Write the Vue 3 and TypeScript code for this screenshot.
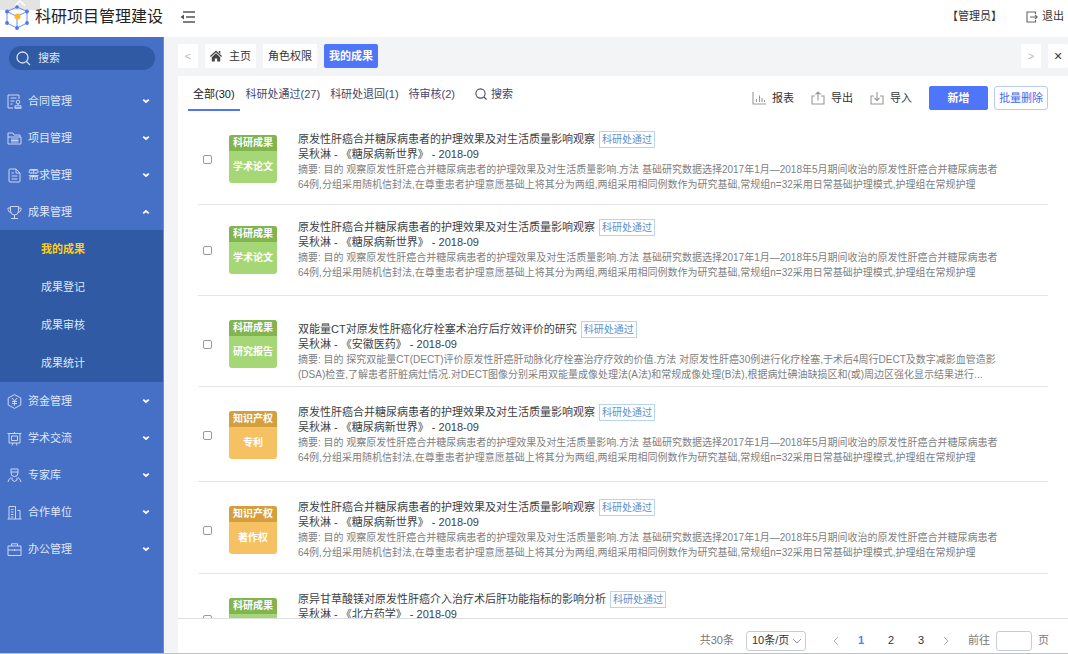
<script setup lang="ts">
import { ref } from 'vue'

interface MenuItem {
  label: string
  icon: string
  open?: boolean
  children?: string[]
}

interface AchievementRecord {
  kind: string
  type: string
  tone: 'green' | 'orange'
  title: string
  author: string
  summary: string[]
  layout: string
}

const menu: MenuItem[] = [
  { label: '合同管理', icon: 'contract' },
  { label: '项目管理', icon: 'folder' },
  { label: '需求管理', icon: 'doc' },
  { label: '成果管理', icon: 'trophy', open: true, children: ['我的成果', '成果登记', '成果审核', '成果统计'] },
  { label: '资金管理', icon: 'fund' },
  { label: '学术交流', icon: 'board' },
  { label: '专家库', icon: 'expert' },
  { label: '合作单位', icon: 'building' },
  { label: '办公管理', icon: 'case' },
]

const filters = ['全部(30)', '科研处通过(27)', '科研处退回(1)', '待审核(2)']
const activeFilter = ref(0)
const activeChild = ref('我的成果')
const page = ref(1)
const keyword = ref('')
const jump = ref('')
const pageSize = ref('10')

const nursing = {
  title: '原发性肝癌合并糖尿病患者的护理效果及对生活质量影响观察',
  author: '吴秋淋 - 《糖尿病新世界》 - 2018-09',
  summary: [
    '摘要: 目的 观察原发性肝癌合并糖尿病患者的护理效果及对生活质量影响.方法 基础研究数据选择2017年1月—2018年5月期间收治的原发性肝癌合并糖尿病患者',
    '64例,分组采用随机信封法,在尊重患者护理意愿基础上将其分为两组,两组采用相同例数作为研究基础,常规组n=32采用日常基础护理模式,护理组在常规护理',
  ],
}

const records: AchievementRecord[] = [
  { kind: '科研成果', type: '学术论文', tone: 'green', layout: 'first', ...nursing },
  { kind: '科研成果', type: '学术论文', tone: 'green', layout: 'raised', ...nursing },
  {
    kind: '科研成果',
    type: '研究报告',
    tone: 'green',
    layout: 'lowered',
    title: '双能量CT对原发性肝癌化疗栓塞术治疗后疗效评价的研究',
    author: '吴秋淋 - 《安徽医药》 - 2018-09',
    summary: [
      '摘要: 目的 探究双能量CT(DECT)评价原发性肝癌肝动脉化疗栓塞治疗疗效的价值.方法 对原发性肝癌30例进行化疗栓塞,于术后4周行DECT及数字减影血管造影',
      '(DSA)检查,了解患者肝脏病灶情况.对DECT图像分别采用双能量成像处理法(A法)和常规成像处理(B法),根据病灶碘油缺损区和(或)周边区强化显示结果进行...',
    ],
  },
  { kind: '知识产权', type: '专利', tone: 'orange', layout: 'tall', ...nursing },
  { kind: '知识产权', type: '著作权', tone: 'orange', layout: 'normal', ...nursing },
  {
    kind: '科研成果',
    type: '',
    tone: 'green',
    layout: 'last',
    title: '原异甘草酸镁对原发性肝癌介入治疗术后肝功能指标的影响分析',
    author: '吴秋淋 - 《北方药学》 - 2018-09',
    summary: [],
  },
]
</script>

<template>
  <div class="app">
    <header class="header">
      <div class="corner" aria-hidden="true">
        <svg width="12" height="6" viewBox="0 0 12 6"><path d="M1 5.500L6 1l5 4.500" /></svg>
      </div>
      <svg class="logo" width="24" height="26" viewBox="0 0 24 26" aria-hidden="true">
        <g fill="none" stroke="#6f8cf0" stroke-width="1">
          <path d="M12 3L22 7.500V19L12 24L2 19V7.500z" />
          <path d="M2 7.500L12 12.500L22 7.500M12 12.500V24" />
        </g>
        <g fill="#4d76f5">
          <circle cx="12" cy="3" r="1.800" /><circle cx="22" cy="7.500" r="1.900" /><circle cx="22" cy="19" r="1.900" />
          <circle cx="12" cy="24" r="1.900" /><circle cx="2" cy="19" r="1.900" /><circle cx="2" cy="7.500" r="1.900" />
        </g>
        <circle cx="12.500" cy="12.500" r="3" fill="#fbb62c" />
      </svg>
      <h1 class="brand">科研项目管理建设</h1>
      <button class="plain fold" type="button" aria-label="收起菜单">
        <svg width="16" height="12" viewBox="0 0 16 12" fill="none" stroke="#555" stroke-width="1.300">
          <path d="M3 1h12M6 6h9M3 11h12" /><path d="M4 3.500L0.500 6L4 8.500z" fill="#555" stroke="none" />
        </svg>
      </button>
      <span class="user">【管理员】</span>
      <button class="plain logout" type="button">
        <svg width="12" height="12" viewBox="0 0 12 12" fill="none" stroke="#666" stroke-width="1.100">
          <path d="M9.500 3V1H1v10h8.500V9M4 6h7M9 3.800L11.200 6L9 8.200" />
        </svg>
        退出
      </button>
    </header>

    <div class="body">
      <aside class="sidebar">
        <label class="search">
          <svg width="15" height="15" viewBox="0 0 15 15" fill="none" stroke="#d3def5" stroke-width="1.300">
            <circle cx="6.500" cy="6.500" r="5.500" /><path d="M10.500 10.500L14 14" />
          </svg>
          <input v-model="keyword" type="text" placeholder="搜索" aria-label="搜索" />
        </label>
        <nav>
          <template v-for="item in menu" :key="item.label">
            <button class="plain menu-item" type="button" :aria-expanded="!!item.open">
              <svg class="menu-icon" width="15" height="15" viewBox="0 0 15 15" aria-hidden="true">
                <template v-if="item.icon === 'contract'">
                  <path d="M6 14H1V1h11v4M3.500 4h6M3.500 7h4M3.500 10h2" />
                  <circle cx="11" cy="8" r="1.800" /><path d="M11 10v1.500M8 14v-2.200h6V14zM7.500 14h7" />
                </template>
                <template v-else-if="item.icon === 'folder'">
                  <path d="M1 13V2h5l1 2h6v2M1 13h13V6H1" /><path d="M4 8h7.500M4 9.500h7.500M4 11h7.500" />
                </template>
                <template v-else-if="item.icon === 'doc'">
                  <path d="M9 1H3Q2 1 2 2v11q0 1 1 1h9q1 0 1-1V5zM9 1v4h4M4.500 5H7M4.500 8h6M4.500 11h6" />
                </template>
                <template v-else-if="item.icon === 'trophy'">
                  <path d="M3.500 1.500h8V6q0 4-4 4t-4-4zM3.500 3H1v1.500Q1 7 4 7.500M11.500 3H14v1.500Q14 7 11 7.500M7.500 10v3.500M4 13.500h7" />
                </template>
                <template v-else-if="item.icon === 'fund'">
                  <path d="M7.500 0.600L13.800 4v7L7.500 14.400L1.200 11V4zM5 4l2.500 3L10 4M5 7.500h5M5 9.500h5M7.500 7v4.500" />
                </template>
                <template v-else-if="item.icon === 'board'">
                  <path d="M0.500 2.500h14M2 2.500v9.500h11V2.500M4.500 5h6v4.500h-6zM7.500 1v1.500M6 12l-1 2.500M9 12l1 2.500" />
                </template>
                <template v-else-if="item.icon === 'expert'">
                  <path d="M4 1h7v4q0 3.500-3.500 3.500T4 5zM4 4h7M4 9.500Q1.500 11 1 14M11 9.500q2.500 1.500 3 4.500M5 9.500V12l2.500 1.500L10 12V9.500" />
                </template>
                <template v-else-if="item.icon === 'building'">
                  <path d="M2 14V1.500h6.500V14M10.500 5.500H13V14M0.500 14h14M4 4.500h2.500M4 7h2.500M4 9.500h2.500M4 12h2.500" />
                </template>
                <template v-else>
                  <path d="M1 4h13v9.500H1zM4.500 4V1.800h6V4M1 8h13M7.500 7v2" />
                </template>
              </svg>
              <span>{{ item.label }}</span>
              <svg class="chevron" width="8" height="6" viewBox="0 0 8 6" aria-hidden="true">
                <path :d="item.open ? 'M1.200 4.400L4 2l2.800 2.400' : 'M1.200 1.600L4 4l2.800-2.400'" />
              </svg>
            </button>
            <div v-if="item.children" class="submenu">
              <button
                v-for="child in item.children"
                :key="child"
                type="button"
                class="plain sub-item"
                :class="{ active: child === activeChild }"
                @click="activeChild = child"
              >
                {{ child }}
              </button>
            </div>
          </template>
        </nav>
      </aside>

      <main class="main">
        <div class="tabs">
          <button class="tab arrow" type="button" aria-label="向左">&lt;</button>
          <button class="tab" type="button">
            <svg width="12" height="12" viewBox="0 0 12 12" fill="#444" aria-hidden="true">
              <path d="M6 0.500L12 6L11.200 7L6 2.200L0.800 7L0 6z" /><path d="M6 3.300L10.200 7.200V11.500H7.200V8.500H4.800v3H1.800V7.200z" /><path d="M8.800 1h1.500v2.800L8.800 2.400z" />
            </svg>
            主页
          </button>
          <button class="tab" type="button">角色权限</button>
          <button class="tab current" type="button">我的成果</button>
          <span class="spacer"></span>
          <button class="tab arrow" type="button" aria-label="向右">&gt;</button>
          <button class="tab close" type="button" aria-label="关闭">×</button>
        </div>

        <section class="panel">
          <div class="toolbar">
            <div class="filters">
              <button
                v-for="(name, i) in filters"
                :key="name"
                type="button"
                class="plain filter"
                :class="{ active: i === activeFilter }"
                @click="activeFilter = i"
              >
                {{ name }}
              </button>
              <button class="plain filter find" type="button">
                <svg width="12" height="12" viewBox="0 0 12 12" fill="none" stroke="#4a4d66" stroke-width="1.100">
                  <circle cx="5.500" cy="5.500" r="4.600" /><path d="M9 9l2.500 2.500" />
                </svg>
                搜索
              </button>
            </div>
            <div class="actions">
              <button class="plain action" type="button">
                <svg width="14" height="14" viewBox="0 0 14 14"><path d="M1 1v12h13M4.500 8v3M7.500 4.500V11M10 7v4M12.500 9v2" /></svg>
                报表
              </button>
              <button class="plain action" type="button">
                <svg width="14" height="14" viewBox="0 0 14 14"><path d="M4 5H1v8h12V5h-3M7 9.500V1M4.500 3.500L7 1l2.500 2.500" /></svg>
                导出
              </button>
              <button class="plain action" type="button">
                <svg width="14" height="14" viewBox="0 0 14 14"><path d="M4 5H1v8h12V5h-3M7 1v8.500M4.500 7L7 9.500L9.500 7" /></svg>
                导入
              </button>
              <button class="primary" type="button">新增</button>
              <button class="outline" type="button">批量删除</button>
            </div>
          </div>

          <ul class="records">
            <li v-for="(record, i) in records" :key="i" class="record" :class="record.layout">
              <div class="lead">
                <input type="checkbox" :aria-label="record.title" />
                <div class="badge" :class="record.tone">
                  <span class="badge-kind">{{ record.kind }}</span>
                  <span class="badge-type">{{ record.type }}</span>
                </div>
              </div>
              <div class="info">
                <div class="title-line">
                  <span>{{ record.title }}</span>
                  <span class="status">科研处通过</span>
                </div>
                <div class="author">{{ record.author }}</div>
                <p class="summary">
                  <span v-for="line in record.summary" :key="line">{{ line }}</span>
                </p>
              </div>
            </li>
          </ul>

          <footer class="pager">
            <span class="muted total">共30条</span>
            <span class="size">
              <select v-model="pageSize" aria-label="每页条数">
                <option value="10">10条/页</option>
                <option value="20">20条/页</option>
              </select>
              <svg width="10" height="6" viewBox="0 0 10 6"><path d="M1 1l4 4l4-4" /></svg>
            </span>
            <button class="plain step" type="button" aria-label="上一页">
              <svg width="6" height="10" viewBox="0 0 6 10"><path d="M5 1L1 5l4 4" /></svg>
            </button>
            <button
              v-for="n in 3"
              :key="n"
              type="button"
              class="plain number"
              :class="{ active: n === page }"
              @click="page = n"
            >
              {{ n }}
            </button>
            <button class="plain step" type="button" aria-label="下一页">
              <svg width="6" height="10" viewBox="0 0 6 10"><path d="M1 1l4 4l-4 4" /></svg>
            </button>
            <label class="muted jump">前往<input v-model="jump" type="text" />页</label>
          </footer>
        </section>
      </main>
    </div>
  </div>
</template>

<style>
body {
  margin: 0;
}
</style>

<style scoped>
* {
  box-sizing: border-box;
}
.app {
  display: flex;
  flex-direction: column;
  height: 100vh;
  overflow: hidden;
  border-bottom: 1px solid #bfc2c8;
  background: #fff;
  color: #333;
  font-family: "Liberation Sans", "Noto Sans CJK SC", sans-serif;
  font-size: 11px;
  line-height: 15px;
}
button,
input,
select {
  font: inherit;
  color: inherit;
}
svg {
  flex: none;
}
.plain {
  display: flex;
  align-items: center;
  padding: 0;
  border: 0;
  background: none;
  white-space: nowrap;
  cursor: pointer;
}
.header {
  position: relative;
  display: flex;
  align-items: center;
  flex: none;
  height: 37px;
  padding: 0 4px 4px 5px;
}
.corner {
  position: absolute;
  top: 0;
  left: 0;
  display: flex;
  justify-content: center;
  width: 40px;
  height: 10px;
  background: rgba(200, 200, 200, 0.5);
}
.corner svg {
  fill: none;
  stroke: #fff;
  stroke-width: 1.5;
}
.logo {
  position: relative;
}
.brand {
  margin: 0 17px 0 6px;
  color: #222;
  font-size: 16px;
  font-weight: 400;
  line-height: 24px;
  white-space: nowrap;
}
.user {
  margin-left: auto;
  margin-right: 24px;
}
.logout {
  gap: 4px;
}
.body {
  display: flex;
  flex: 1;
  min-height: 0;
}
.sidebar {
  flex: none;
  width: 164px;
  padding-top: 9px;
  background: #466fc6;
  border-right: 1px solid #6a8cd0;
  color: #dfe8fa;
}
.search {
  display: flex;
  align-items: center;
  gap: 7px;
  height: 24px;
  margin: 0 8px 12px 9px;
  padding: 0 7px;
  border-radius: 12px;
  background: #305aa3;
}
.search input {
  flex: 1;
  min-width: 0;
  padding: 0;
  border: 0;
  outline: 0;
  background: none;
}
.search input::placeholder {
  color: #dfe8fa;
  opacity: 1;
}
.menu-item {
  width: 100%;
  height: 37px;
  padding: 1px 13px 0 7px;
  gap: 6px;
}
.menu-icon {
  fill: none;
  stroke: #c9d7f4;
  stroke-width: 1;
}
.chevron {
  margin-left: auto;
  fill: none;
  stroke: #fff;
  stroke-width: 1.8;
}
.submenu {
  background: #305aa3;
}
.sub-item {
  width: 100%;
  height: 38px;
  padding-left: 41px;
}
.sub-item.active {
  color: #ffd012;
  font-weight: 700;
}
.main {
  display: flex;
  flex: 1;
  flex-direction: column;
  min-width: 0;
  padding-left: 14px;
  background: #f2f4f6;
}
.tabs {
  display: flex;
  flex: none;
  gap: 7px;
  padding: 7px 0 8px;
}
.tab {
  display: flex;
  align-items: center;
  justify-content: center;
  gap: 7px;
  height: 24px;
  padding: 0 5px;
  border: 0;
  border-radius: 2px;
  background: #fff;
  white-space: nowrap;
}
.tab.arrow,
.tab.close {
  width: 20px;
}
.tab.arrow {
  color: #b8b8b8;
}
.tab.close {
  font-size: 14px;
}
.tab.current {
  background: #4f75fb;
  color: #fff;
  font-weight: 700;
}
.spacer {
  flex: 1;
}
.panel {
  display: flex;
  flex: 1;
  flex-direction: column;
  min-height: 0;
  background: #fff;
}
.toolbar {
  display: flex;
  flex: none;
  justify-content: space-between;
  height: 38px;
  padding: 0 20px 0 10px;
}
.filters {
  display: flex;
  height: 35px;
}
.filter {
  padding: 3px 5px 0;
  border-bottom: 2px solid transparent;
  color: #45486a;
}
.filter.active {
  margin-right: 1px;
  border-color: #4f75fb;
  color: #222;
}
.filter.find {
  gap: 4px;
  margin-left: 10px;
}
.actions {
  display: flex;
  align-items: center;
  height: 24px;
  margin-top: 10px;
}
.action {
  gap: 6px;
  margin-right: 17px;
}
.action svg {
  fill: none;
  stroke: #999;
  stroke-width: 1.1;
}
.primary,
.outline {
  height: 24px;
  padding: 0 4px;
  border: 1px solid #4f75fb;
  border-radius: 3px;
  white-space: nowrap;
}
.primary {
  width: 59px;
  margin-right: 6px;
  border-radius: 2px;
  background: #4f75fb;
  color: #fff;
  font-weight: 700;
}
.outline {
  border-color: #b5cbfa;
  background: #fff;
  color: #4169f0;
}
.records {
  flex: 1;
  min-height: 0;
  margin: 0;
  padding: 0 20px;
  overflow: hidden;
  list-style: none;
}
.record {
  display: flex;
  align-items: flex-start;
  min-height: 92px;
  border-bottom: 1px solid #e4e5e7;
}
.lead {
  display: flex;
  flex: none;
  align-items: center;
  gap: 16px;
  margin: 24px 21px 0 5px;
}
.lead input {
  appearance: none;
  width: 9px;
  height: 9px;
  margin: 0 1px 0 0;
  border: 1px solid #999;
  border-radius: 2px;
  background: #fff;
}
.lead input:checked {
  background: #4f75fb;
}
.info {
  min-width: 0;
  margin-top: 18px;
  color: #3c3f44;
}
.first,
.raised,
.lowered {
  min-height: 91px;
}
.first .lead,
.raised .lead {
  margin-top: 21px;
}
.raised .info {
  margin-top: 15px;
}
.lowered .info {
  margin-top: 26px;
}
.tall {
  min-height: 95px;
}
.last .lead {
  align-items: flex-start;
}
.last .lead input {
  margin-top: 17px;
}
.badge {
  width: 48px;
  overflow: hidden;
  border-radius: 3px;
  color: #fff;
  font-size: 10px;
  font-weight: 700;
  text-align: center;
}
.badge span {
  display: block;
}
.badge-kind {
  line-height: 16px;
}
.badge-type {
  height: 32px;
  line-height: 32px;
}
.green {
  background: #a6d777;
}
.green .badge-kind {
  background: #82b44f;
}
.orange {
  background: #f6c162;
}
.orange .badge-kind {
  background: #d69f3e;
}
.title-line {
  display: flex;
  align-items: center;
  gap: 4px;
  height: 15px;
  white-space: nowrap;
}
.status {
  padding: 0 2px;
  border: 1px solid #b9d3f2;
  color: #5e8fcb;
  font-size: 10px;
}
.summary {
  margin: 0;
  color: #808080;
  font-size: 10px;
}
.summary span {
  display: block;
  white-space: nowrap;
}
.pager {
  display: flex;
  flex: none;
  align-items: center;
  justify-content: flex-end;
  height: 35px;
  padding: 9px 19px 0 0;
  border-top: 1px solid #dddfe2;
}
.muted {
  color: #777;
}
.total {
  margin-right: 12px;
}
.size {
  position: relative;
  display: flex;
  align-items: center;
  margin-right: 20px;
}
.size select {
  appearance: none;
  width: 60px;
  height: 20px;
  padding: 0 5px;
  border: 1px solid #c9ccd2;
  border-radius: 3px;
  background: #fff;
}
.size svg {
  position: absolute;
  right: 4px;
  fill: none;
  stroke: #999;
  pointer-events: none;
}
.step {
  justify-content: center;
  width: 20px;
  height: 20px;
}
.step svg {
  fill: none;
  stroke: #b0b3b8;
}
.number {
  justify-content: center;
  width: 30px;
  height: 20px;
}
.number.active {
  color: #3f88f5;
  font-weight: 700;
}
.jump {
  display: flex;
  align-items: center;
  gap: 6px;
  margin-left: 12px;
}
.jump input {
  width: 36px;
  height: 20px;
  padding: 0 4px;
  border: 1px solid #c9ccd2;
  border-radius: 3px;
}
</style>
